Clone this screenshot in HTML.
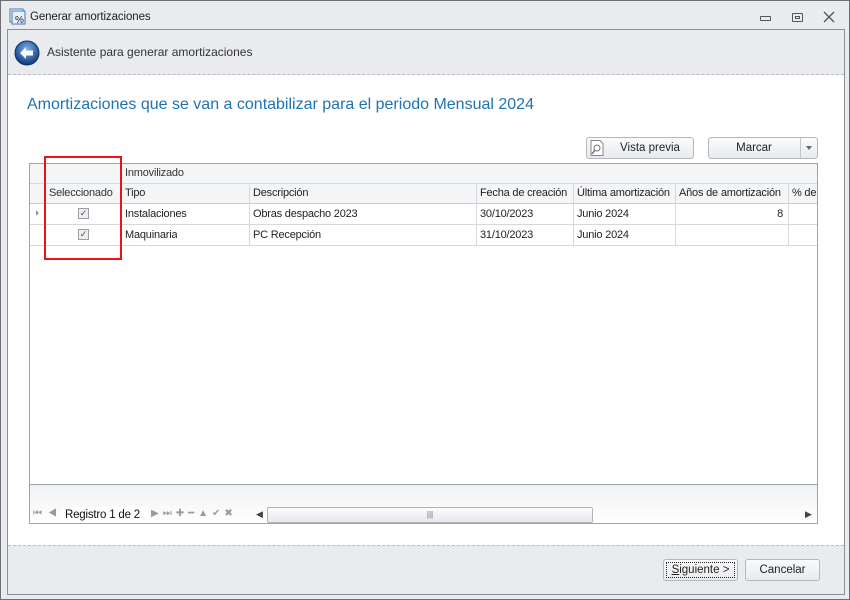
<!DOCTYPE html>
<html><head><style>
*{box-sizing:border-box;margin:0;padding:0}
body{width:850px;height:600px;background:#e9ebee;font-family:"Liberation Sans",sans-serif;font-size:12px;color:#222;position:relative;overflow:hidden}
.a{position:absolute}
.win{left:0;top:0;width:850px;height:600px;border:1px solid #6b7077;background:#e9ebee}
.frame{left:7px;top:29px;width:838px;height:566px;border:1px solid #8d9196;background:#e9ebee}
.dash{height:0;border-top:1px dashed #b8bcc2}
.btn{border:1px solid #b5b9bf;border-radius:3px;background:linear-gradient(#fafbfc,#e8eaed);text-align:center;font-size:11.5px;color:#222}
.grid{left:29px;top:163px;width:789px;height:361px;border:1px solid #a0a4aa;background:#fff;overflow:hidden}
.c{position:absolute;height:21px;line-height:20px;padding-left:4px;font-size:11px;letter-spacing:-0.2px;white-space:nowrap;overflow:hidden}
.hd{background:#f4f5f7;color:#333}
.ln{position:absolute;background:#d6d8dc}
.cb{position:absolute;width:11px;height:11px;border:1px solid #9a9ea4;background:#eceef0;font-size:9px;line-height:9px;text-align:center;color:#555}
</style></head><body>
<div class="a win"></div>
<svg class="a" style="left:9px;top:8px" width="18" height="18"><rect x="1" y="1" width="13" height="13" fill="#fff" stroke="#3d78b8"/><rect x="3" y="3" width="13" height="13" fill="#e8f0fa" stroke="#3d78b8"/><text x="6" y="15" font-size="10" font-family="Liberation Sans" fill="#222">%</text></svg>
<div class="a" style="left:30px;top:11px;font-size:11.5px;letter-spacing:-0.1px">Generar amortizaciones</div>
<div class="a" style="left:760px;top:16px;width:11px;height:5px;border:1px solid #555;border-radius:1px"></div>
<div class="a" style="left:792px;top:13px;width:11px;height:9px;border:1px solid #555;border-radius:1px"><div style="margin:2px;height:3px;border:1px solid #555"></div></div>
<svg class="a" style="left:823px;top:11px" width="12" height="12"><path d="M1 1L11 11M11 1L1 11" stroke="#555" stroke-width="1.3"/></svg>
<div class="a frame"></div>
<svg class="a" style="left:14px;top:40px" width="26" height="26"><defs><radialGradient id="g" cx="50%" cy="35%" r="60%"><stop offset="0" stop-color="#7fb3ea"/><stop offset="1" stop-color="#123f80"/></radialGradient></defs><circle cx="13" cy="13" r="12" fill="url(#g)" stroke="#0e3264"/><path d="M6 13 L12 7 L12 10.5 L19 10.5 L19 15.5 L12 15.5 L12 19 Z" fill="#fff"/></svg>
<div class="a" style="left:47px;top:45px;font-size:12px;color:#333">Asistente para generar amortizaciones</div>
<div class="a dash" style="left:8px;top:74px;width:836px"></div>
<div class="a" style="left:8px;top:75px;width:836px;height:470px;background:#fff"></div>
<div class="a" style="left:27px;top:96px;font-size:16px;color:#1e73b4">Amortizaciones que se van a contabilizar para el periodo Mensual 2024</div>
<div class="a btn" style="left:586px;top:137px;width:108px;height:22px;line-height:20px;padding-left:20px">Vista previa</div>
<svg class="a" style="left:590px;top:140px" width="14" height="16"><path d="M1 .5H10L13 3.5V15.5H1Z" fill="#fff" stroke="#888"/><circle cx="7" cy="8" r="3" fill="none" stroke="#777"/><path d="M5 10L2 14" stroke="#777" stroke-width="1.5"/></svg>
<div class="a btn" style="left:708px;top:137px;width:110px;height:22px;line-height:20px;padding-right:18px">Marcar</div>
<div class="a" style="left:800px;top:138px;width:1px;height:20px;background:#c4c7cc"></div>
<div class="a" style="left:806px;top:146px;border:3.5px solid transparent;border-top:4px solid #666"></div>
<div class="a grid">
 <div class="a hd" style="left:0;top:0;width:789px;height:40px"></div>
 <div class="ln" style="left:0;top:19px;width:789px;height:1px"></div>
 <div class="ln" style="left:0;top:39px;width:789px;height:1px;background:#c8cbd0"></div>
 <div class="c" style="left:91px;top:-1px;color:#333">Inmovilizado</div>
 <div class="c" style="left:14px;top:19px;width:78px;padding-left:5px;color:#333">Seleccionado</div>
 <div class="c" style="left:91px;top:19px">Tipo</div>
 <div class="c" style="left:219px;top:19px">Descripción</div>
 <div class="c" style="left:446px;top:19px;width:97px">Fecha de creación</div>
 <div class="c" style="left:543px;top:19px;width:102px">Última amortización</div>
 <div class="c" style="left:645px;top:19px;width:113px">Años de amortización</div>
 <div class="c" style="left:758px;top:19px">% de</div>
 <div class="ln" style="left:91px;top:19px;width:1px;height:62px"></div>
 <div class="ln" style="left:219px;top:19px;width:1px;height:62px"></div>
 <div class="ln" style="left:446px;top:19px;width:1px;height:62px"></div>
 <div class="ln" style="left:543px;top:19px;width:1px;height:62px"></div>
 <div class="ln" style="left:645px;top:19px;width:1px;height:62px"></div>
 <div class="ln" style="left:758px;top:19px;width:1px;height:62px"></div>
 <div class="ln" style="left:14px;top:0;width:1px;height:81px"></div>
 <div class="ln" style="left:0;top:60px;width:789px;height:1px"></div>
 <div class="ln" style="left:0;top:81px;width:789px;height:1px"></div>
 <div class="a" style="left:6px;top:46px;border:3px solid transparent;border-left:3px solid #999"></div>
 <div class="cb" style="left:48px;top:44px">✓</div>
 <div class="cb" style="left:48px;top:65px">✓</div>
 <div class="c" style="left:91px;top:40px">Instalaciones</div>
 <div class="c" style="left:219px;top:40px">Obras despacho 2023</div>
 <div class="c" style="left:446px;top:40px">30/10/2023</div>
 <div class="c" style="left:543px;top:40px">Junio 2024</div>
 <div class="c" style="left:645px;top:40px;width:113px;text-align:right;padding-right:5px">8</div>
 <div class="c" style="left:91px;top:61px">Maquinaria</div>
 <div class="c" style="left:219px;top:61px">PC Recepción</div>
 <div class="c" style="left:446px;top:61px">31/10/2023</div>
 <div class="c" style="left:543px;top:61px">Junio 2024</div>
 <div class="a" style="left:0;top:320px;width:789px;height:41px;border-top:1px solid #a0a4aa;background:linear-gradient(#f0f2f4,#ffffff)"></div>
 <div class="a" style="left:3px;top:344px;font-size:10px;color:#999;letter-spacing:6px">⏮◀</div>
 <div class="a" style="left:31px;top:343px;width:87px;height:17px;background:#fff;font-size:11.5px;line-height:17px;padding-left:4px;color:#111;letter-spacing:-0.2px;white-space:nowrap">Registro 1 de 2</div>
 <div class="a" style="left:121px;top:344px;font-size:10px;color:#999;letter-spacing:4px;white-space:nowrap">▶⏭✚━▲✔✖</div>
 <div class="a" style="left:226px;top:345px;font-size:9px;color:#444">◀</div>
 <div class="a" style="left:237px;top:343px;width:326px;height:16px;border:1px solid #b0b4ba;border-radius:2px;background:linear-gradient(#fdfdfd,#e6e8eb);text-align:center;font-size:8px;line-height:14px;color:#666">|||</div>
 <div class="a" style="left:775px;top:345px;font-size:9px;color:#444">▶</div>
</div>
<div class="a" style="left:44px;top:156px;width:78px;height:104px;border:2px solid #e8141a"></div>
<div class="a dash" style="left:8px;top:545px;width:836px"></div>
<div class="a btn" style="left:663px;top:559px;width:75px;height:22px;line-height:20px"><span style="display:block;margin:2px;border:1px dotted #222;line-height:14px"><u>S</u>iguiente &gt;</span></div>
<div class="a btn" style="left:745px;top:559px;width:75px;height:22px;line-height:20px">Cancelar</div>
</body></html>
